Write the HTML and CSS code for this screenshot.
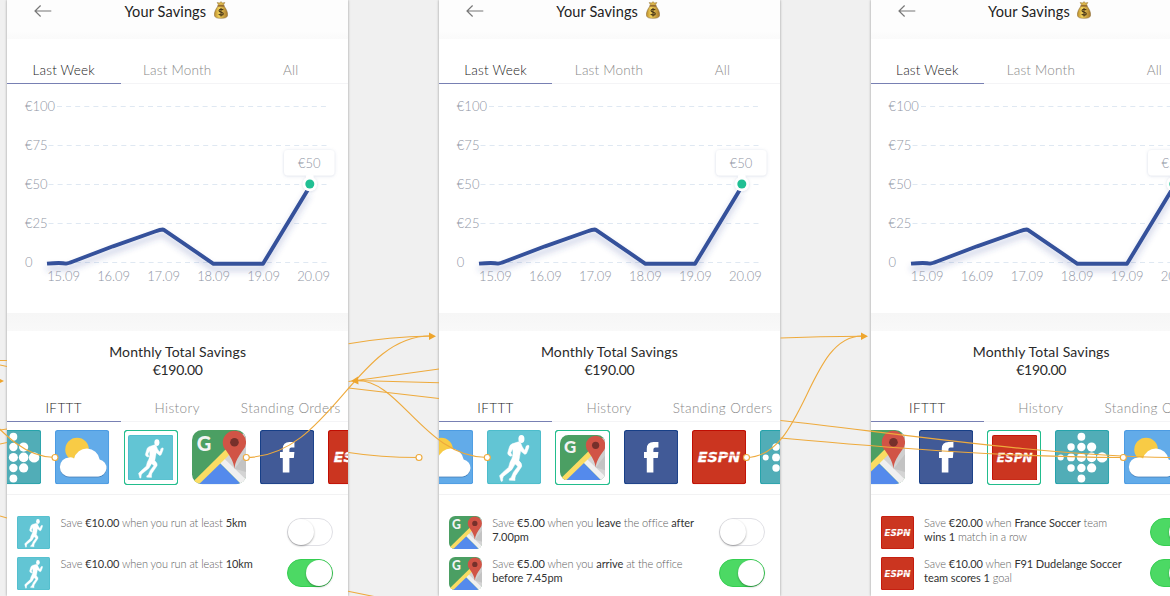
FILE: index.html
```html
<!DOCTYPE html>
<html lang="en">
<head>
<meta charset="utf-8">
<title>Your Savings</title>
<link rel="stylesheet" href="styles.css">
</head>
<body>
<svg class="defs" aria-hidden="true">
  <defs>
    <clipPath id="round"><rect width="54" height="54" rx="10"/></clipPath>
    <linearGradient id="coin" x1="0" y1="0" x2="1" y2="0"><stop offset="0" stop-color="#b98a2c"/><stop offset=".35" stop-color="#f3d35c"/><stop offset="1" stop-color="#a8792a"/></linearGradient>
    <filter id="soft" x="-20%" y="-20%" width="140%" height="160%"><feDropShadow dx="0" dy="5" stdDeviation="3" flood-color="#34499a" flood-opacity=".3"/></filter>
    <filter id="lift" x="-20%" y="-20%" width="140%" height="150%"><feDropShadow dx="0" dy=".8" stdDeviation=".7" flood-color="#204a80" flood-opacity=".5"/></filter>
    <filter id="tip" x="-20%" y="-30%" width="140%" height="170%"><feDropShadow dx="0" dy=".5" stdDeviation="1.8" flood-color="#7c8db5" flood-opacity=".32"/></filter>
  </defs>
  <symbol id="back" viewBox="0 0 18 14"><path d="M17.300 7H1M6.600 1.500 1 7l5.600 5.500" fill="none" stroke="#777" stroke-width="1.200"/></symbol>
  <symbol id="bag" viewBox="0 0 14 18">
    <path d="M4.300 4.800C1.800 7.700.4 10.800.4 13.600.4 16.200 2 17.300 7 17.300s6.600-1.100 6.600-3.700c0-2.800-1.400-5.900-3.900-8.800z" fill="url(#coin)" stroke="#80602a" stroke-width=".5"/>
    <path d="M4.700 4.300 3.200 1.500l2.100.5L7 .7 8.700 2l2.100-.5-1.500 2.800z" fill="#dcb64b" stroke="#8c6a2b" stroke-width=".5"/>
    <path d="M4 4.900h6" stroke="#8c5f25" stroke-width="1.300" stroke-linecap="round"/>
    <path d="M9.300 8.900C8.500 8 5 7.800 5 9.700c0 2 4.300 1 4.300 3 0 1.900-3.700 1.700-4.600.5M7 7v8.400" fill="none" stroke="#49381a" stroke-width="1.100"/>
  </symbol>
  <symbol id="graph" viewBox="0 0 341 228">
    <g stroke="#dfe8f2" stroke-width="1" stroke-dasharray="5 4.100">
      <path d="M50 21.500H320M41.500 60.500H320M41.500 99.500H320M41.500 138.500H320M41.500 177.500H320"/>
    </g>
    <path d="M40 178.600Q54 177.400 59 178.600Q61 178.500 66 176.500L106 161.300L148 146.500Q154 144.300 156.500 144.600L206.500 178.800H256L301 104.500" fill="none" stroke="#34519b" stroke-width="3.900" stroke-linejoin="round" filter="url(#soft)"/>
    <rect x="277" y="65" width="50.500" height="25.500" rx="4" fill="#fff" filter="url(#tip)"/>
    <circle cx="302.800" cy="99" r="7.300" fill="#fff" filter="url(#tip)"/>
    <path d="M299 90.500l3.800-2 3.800 2v3h-7.600z" fill="#fff"/>
    <circle cx="302.800" cy="99" r="4.500" fill="#20bf93"/>
  </symbol>
  <symbol id="fitbit" viewBox="0 0 54 54">
    <rect width="54" height="54" rx="2.500" fill="#26a3ab"/><rect x="1" y="1" width="52" height="52" rx="1.800" fill="#51adb7"/>
    <g fill="#fff">
      <circle cx="5.700" cy="27.300" r="3"/>
      <circle cx="16" cy="17" r="3.700"/><circle cx="16" cy="27.300" r="3.900"/><circle cx="16" cy="37.800" r="3.700"/>
      <circle cx="26.300" cy="6.700" r="3.900"/><circle cx="26.300" cy="17" r="4.200"/><circle cx="26.300" cy="27.300" r="4.500"/><circle cx="26.300" cy="37.800" r="4.200"/><circle cx="26.300" cy="48.300" r="3.900"/>
      <circle cx="36.500" cy="17" r="4.600"/><circle cx="36.500" cy="27.300" r="4.800"/><circle cx="36.500" cy="37.800" r="4.600"/>
      <circle cx="46.900" cy="27.300" r="5.200"/>
    </g>
  </symbol>
  <symbol id="weather" viewBox="0 0 54 54">
    <rect width="54" height="54" rx="2.500" fill="#4c9be2"/><rect x="1" y="1" width="52" height="52" rx="1.800" fill="#62abe9"/>
    <circle cx="22" cy="19.500" r="11.800" fill="#f8cb45"/>
    <path d="M14.500 46.300a9.500 9.500 0 0 1-.3-19 7 7 0 0 1 4.800 1.200A13 13 0 0 1 44.500 29.300a8.600 8.600 0 0 1-1.500 17z" fill="#fff" filter="url(#lift)"/>
  </symbol>
  <symbol id="runner" viewBox="0 0 54 54">
    <rect width="54" height="54" rx="2.500" fill="#4cbccb"/><rect x="1" y="1" width="52" height="52" rx="1.800" fill="#62c5d4"/>
    <ellipse cx="34.300" cy="9" rx="3" ry="4" fill="#fff"/>
    <path d="M31.500 11.700 25 13.800Q22.600 14.800 22 18L20.600 23Q20.500 25 23.400 26.200L25.200 25.500 24.200 23.700 23.700 22.500 25.700 18.800Q26.500 24 24.800 28.500Q22.500 32 21.600 37L15.500 42.500 12.500 45.500 14 51Q16 52 15.600 48.500L16.300 46.300 24.800 39.500 28 34Q30 35 30.600 36.500L26.400 42 24 47.500 22.300 48.500 22.200 50 28 50.300Q27.500 48.200 28.500 45.500L34.500 36.500Q35.500 33.800 31.800 30.500Q32.600 26 33.500 21L37.500 24.200Q39.200 24.500 39.800 22.500L41.700 17.500Q42.500 14.700 40.400 15.300Q38.300 16 38.600 18L37.300 20.200 35 16.500 33.500 12.800z" fill="#fff" stroke="#fff" stroke-width=".5"/>
  </symbol>
  <symbol id="maps" viewBox="0 0 54 54">
    <g clip-path="url(#round)">
      <rect width="54" height="54" fill="#4b9f63"/>
      <path d="M30 25 54 0v54h-3z" fill="#cfcfcf"/>
      <path d="M35 23 54 42V54H50L28 31z" fill="#d4d4d4"/>
      <path d="M26.500 31.800 4 54H49z" fill="#548aec"/>
      <path d="M26.800 31.800 31 27.500 57 52.500 52 57z" fill="#f0f0f0"/>
      <path d="M-2 54.500 38 15l3 6L6 55z" fill="#fadc63"/>
      <path d="M42.500 38.500 54 24v18z" fill="#bbb" opacity=".6"/>
      <text class="g-mark" x="4.800" y="21.200">G</text>
      <path d="M42.300 38.700C41.500 31 38 26.500 34 20.500A11.600 11.600 0 1 1 50.500 20.500C46.500 26.500 43 31 42.300 38.700z" fill="#d15446"/>
      <circle cx="42.300" cy="12.200" r="4.300" fill="#76302b"/>
    </g>
  </symbol>
  <symbol id="facebook" viewBox="0 0 54 54">
    <rect width="54" height="54" rx="2.500" fill="#173f87"/><rect x="1" y="1" width="52" height="52" rx="1.800" fill="#415a97"/>
    <path d="M22.700 42.300V28H19.900V22h2.800v-3.300q0-6.700 6.800-6.700h4.800v5.500h-3q-2 0-2 2V22h5l-.6 6h-4.400v14.300z" fill="#fff"/>
  </symbol>
  <symbol id="espn" viewBox="0 0 54 54">
    <rect width="54" height="54" rx="2.500" fill="#c00d02"/><rect x="1" y="1" width="52" height="52" rx="1.800" fill="#cb3520"/>
    <text class="espn-mark" x="5.700" y="32.300" textLength="42.500" lengthAdjust="spacingAndGlyphs">ESPN</text>
    <path d="M5 25H49" stroke="#cb3520" stroke-width=".8"/>
  </symbol>
</svg>

<main class="canvas">
  <section class="phone">
    <header class="bar"><svg class="back"><use href="#back"/></svg><h1>Your Savings</h1><svg class="bag"><use href="#bag"/></svg></header>
    <nav class="tabs range"><span class="on">Last Week</span><span>Last Month</span><span>All</span></nav>
    <div class="chart">
      <svg class="graph"><use href="#graph"/></svg>
      <div class="yaxis"><span>€100</span><span>€75</span><span>€50</span><span>€25</span><span>0</span></div>
      <div class="xaxis"><span>15.09</span><span>16.09</span><span>17.09</span><span>18.09</span><span>19.09</span><span>20.09</span></div>
      <div class="value">€50</div>
    </div>
    <div class="band"></div>
    <div class="total"><span>Monthly Total Savings</span><b>€190.00</b></div>
    <nav class="tabs kind"><span class="on">IFTTT</span><span>History</span><span>Standing Orders</span></nav>
    <div class="apps">
      <svg><use href="#fitbit"/></svg><svg><use href="#weather"/></svg><div class="picked"><svg><use href="#runner"/></svg></div><svg><use href="#maps"/></svg><svg><use href="#facebook"/></svg><svg><use href="#espn"/></svg>
    </div>
    <div class="rules">
      <div class="rule"><svg><use href="#runner"/></svg><p>Save <b>€10.00</b> when you run at least <b>5km</b></p><i class="switch"></i></div>
      <div class="rule"><svg><use href="#runner"/></svg><p>Save <b>€10.00</b> when you run at least <b>10km</b></p><i class="switch active"></i></div>
    </div>
  </section>

  <section class="phone">
    <header class="bar"><svg class="back"><use href="#back"/></svg><h1>Your Savings</h1><svg class="bag"><use href="#bag"/></svg></header>
    <nav class="tabs range"><span class="on">Last Week</span><span>Last Month</span><span>All</span></nav>
    <div class="chart">
      <svg class="graph"><use href="#graph"/></svg>
      <div class="yaxis"><span>€100</span><span>€75</span><span>€50</span><span>€25</span><span>0</span></div>
      <div class="xaxis"><span>15.09</span><span>16.09</span><span>17.09</span><span>18.09</span><span>19.09</span><span>20.09</span></div>
      <div class="value">€50</div>
    </div>
    <div class="band"></div>
    <div class="total"><span>Monthly Total Savings</span><b>€190.00</b></div>
    <nav class="tabs kind"><span class="on">IFTTT</span><span>History</span><span>Standing Orders</span></nav>
    <div class="apps">
      <svg><use href="#weather"/></svg><svg><use href="#runner"/></svg><div class="picked"><svg><use href="#maps"/></svg></div><svg><use href="#facebook"/></svg><svg><use href="#espn"/></svg><svg><use href="#fitbit"/></svg>
    </div>
    <div class="rules">
      <div class="rule"><svg><use href="#maps"/></svg><p>Save <b>€5.00</b> when you <b>leave</b> the office <b>after<br>7.00pm</b></p><i class="switch"></i></div>
      <div class="rule"><svg><use href="#maps"/></svg><p>Save <b>€5.00</b> when you <b>arrive</b> at the office<br><b>before 7.45pm</b></p><i class="switch active"></i></div>
    </div>
  </section>

  <section class="phone">
    <header class="bar"><svg class="back"><use href="#back"/></svg><h1>Your Savings</h1><svg class="bag"><use href="#bag"/></svg></header>
    <nav class="tabs range"><span class="on">Last Week</span><span>Last Month</span><span>All</span></nav>
    <div class="chart">
      <svg class="graph"><use href="#graph"/></svg>
      <div class="yaxis"><span>€100</span><span>€75</span><span>€50</span><span>€25</span><span>0</span></div>
      <div class="xaxis"><span>15.09</span><span>16.09</span><span>17.09</span><span>18.09</span><span>19.09</span><span>20.09</span></div>
      <div class="value">€50</div>
    </div>
    <div class="band"></div>
    <div class="total"><span>Monthly Total Savings</span><b>€190.00</b></div>
    <nav class="tabs kind"><span class="on">IFTTT</span><span>History</span><span>Standing Orders</span></nav>
    <div class="apps">
      <svg><use href="#maps"/></svg><svg><use href="#facebook"/></svg><div class="picked"><svg><use href="#espn"/></svg></div><svg><use href="#fitbit"/></svg><svg><use href="#weather"/></svg><svg><use href="#runner"/></svg>
    </div>
    <div class="rules">
      <div class="rule"><svg><use href="#espn"/></svg><p>Save <b>€20.00</b> when <b>France Soccer</b> team<br><b>wins 1</b> match in a row</p><i class="switch active"></i></div>
      <div class="rule"><svg><use href="#espn"/></svg><p>Save <b>€10.00</b> when <b>F91 Dudelange Soccer<br>team scores 1</b> goal</p><i class="switch active"></i></div>
    </div>
  </section>
</main>

<svg class="links" viewBox="0 0 1170 596" aria-hidden="true">
  <g fill="none" stroke="#eeaa3c" stroke-width="1.100">
    <path d="M0 360.500H7M0 365 7 366.500M0 430 7 429M0 444 7 442.500M0 516 7 518M348 591.200 374 596.500"/>
    <path d="M-60 376C-22 392 5 457 55 457.500"/>
    <path d="M246 457.500C330 457 355 336 430 336"/>
    <path d="M348.500 343.800Q390 336.500 430 336"/>
    <path d="M348.500 381.500 356 380.500 439 369M356 380.500 439 382.700M348.500 388 439 398.500"/>
    <path d="M357 380.500C400 380 425 457 487 457.500"/>
    <path d="M348.500 452.500Q380 457.500 419 457.500"/>
    <path d="M780.500 338Q820 336.300 862 336.300"/>
    <path d="M746 457.500C806 457 807 336 862 336"/>
    <path d="M780.500 420.500C880 431 1050 457 1170 457.500"/>
    <path d="M780.500 438C880 447 1000 457 1123 457.500"/>
  </g>
  <path d="M429 332.500 436 336.300 429 340zM861 332.500 868 336.300 861 340zM358 376.500 351 381 358.500 384.500zM-3 377.500 4 381-3 384.500z" fill="#eea52d"/>
  <g fill="#fff" stroke="#eeaa3c" stroke-width="1.100"><circle cx="55" cy="457.500" r="3"/><circle cx="246.300" cy="457.500" r="3"/><circle cx="419" cy="457.500" r="3"/><circle cx="487.300" cy="457.500" r="3"/><circle cx="746.500" cy="457.500" r="3"/><circle cx="1123.300" cy="457.500" r="3"/></g>
</svg>
</body>
</html>
```
FILE: styles.css
```css
* { box-sizing: border-box; }
body {
  margin: 0;
  width: 1170px;
  height: 596px;
  overflow: hidden;
  position: relative;
  background: #f0f0f0;
  font-family: Lato, "Open Sans", sans-serif;
  font-weight: 300;
  color: #333;
}
.defs { position: absolute; width: 0; height: 0; }
.canvas { display: flex; gap: 90.5px; padding-left: 7px; height: 596px; }
.phone {
  flex: 0 0 341.3px;
  height: 596px;
  overflow: hidden;
  background: #fff;
  box-shadow: 0 0 2.500px rgba(0, 0, 0, .38);
}
.bar {
  height: 39px;
  display: grid;
  grid-template-columns: 117.500px auto 14px;
  justify-content: start;
  align-items: start;
  background: linear-gradient(#fdfdfd 80%, #fafafa);
}
.back { width: 18px; height: 14px; margin: 3.500px 0 0 27px; }
.bag { width: 14px; height: 18px; margin: 1px 0 0 7.500px; }
h1 { margin: 2px 0 0; font-size: 14.500px; line-height: 19px; font-weight: 400; color: #222; letter-spacing: .13px; }
.tabs {
  display: grid;
  grid-template-columns: repeat(3, 113.500px);
  text-align: center;
  font-size: 13.500px;
  line-height: 18px;
  letter-spacing: .2px;
  color: #888;
  border-bottom: 1px solid #f4f4f6;
}
.tabs span { white-space: nowrap; }
.tabs .on { color: #222; border-bottom: 1px solid #7880b3; margin-bottom: -1px; }
.range { height: 45px; }
.range span { padding-top: 22px; }
.kind { height: 38px; letter-spacing: .4px; }
.kind span { padding-top: 15px; }
.chart { display: grid; height: 229px; padding-top: 1px; color: #8f95a4; font-size: 13px; line-height: 16px; }
.chart > * { grid-area: 1 / 1; }
.graph { width: 341px; height: 228px; }
.yaxis { display: grid; grid-auto-rows: 39.1px; padding: 13px 0 0 18px; align-content: start; justify-content: start; }
.xaxis { display: grid; grid-template-columns: repeat(6, 50px); padding: 183px 0 0 31.500px; text-align: center; letter-spacing: -.1px; }
.value { padding: 70px 0 0 277px; width: 327.500px; text-align: center; }
.band { height: 18px; background: linear-gradient(#f6f6f6, #f9f9f9); }
.total {
  height: 53px;
  padding-top: 12px;
  display: grid;
  justify-items: center;
  align-content: start;
  font-size: 14px;
  line-height: 18px;
  letter-spacing: .15px;
  color: #2a2a2a;
  font-weight: 400;
}
.total b { font-weight: 400; letter-spacing: -.3px; }
.apps {
  display: flex;
  gap: 14px;
  height: 73px;
  padding-top: 8.400px;
  margin-left: -19.800px;
  border-bottom: 1px solid #f2f2f3;
}
.apps > * { flex: 0 0 54.200px; width: 54.200px; height: 54.200px; }
.picked { border: 1.500px solid #22bd8d; outline: .4px solid #22bd8d; outline-offset: -1.400px; border-radius: 3px; display: grid; place-items: center; }
.picked svg { width: 45.500px; height: 45.500px; }
.rules { display: grid; gap: 8px; padding: 21px 15.500px 0 10px; }
.rule { display: grid; grid-template-columns: 43.500px 1fr 46px; height: 33px; }
.rule svg { width: 33px; height: 33px; }
.rule p { margin: 0 0 0; font-size: 11px; line-height: 14px; letter-spacing: -.08px; color: #5e5e5e; white-space: nowrap; }
.rule b { font-weight: 400; color: #333; }
.switch {
  width: 46px;
  height: 28px;
  margin-top: 1.500px;
  border-radius: 14px;
  border: 1px solid #e0e0e5;
  display: flex;
}
.switch::before {
  content: "";
  width: 26px;
  height: 26px;
  border-radius: 13px;
  background: #fff;
  box-shadow: 0 1px 2px rgba(0, 0, 0, .35);
}
.active { background: #4cd964; border-color: #35ce51; justify-content: flex-end; }
.g-mark { font: 900 20px Lato, sans-serif; fill: #f3f3f3; }
.espn-mark { font: italic 700 14.500px "DejaVu Sans", sans-serif; fill: #fff; stroke: #fff; stroke-width: .3px; }
.links { position: absolute; inset: 0; width: 1170px; height: 596px; }
```
